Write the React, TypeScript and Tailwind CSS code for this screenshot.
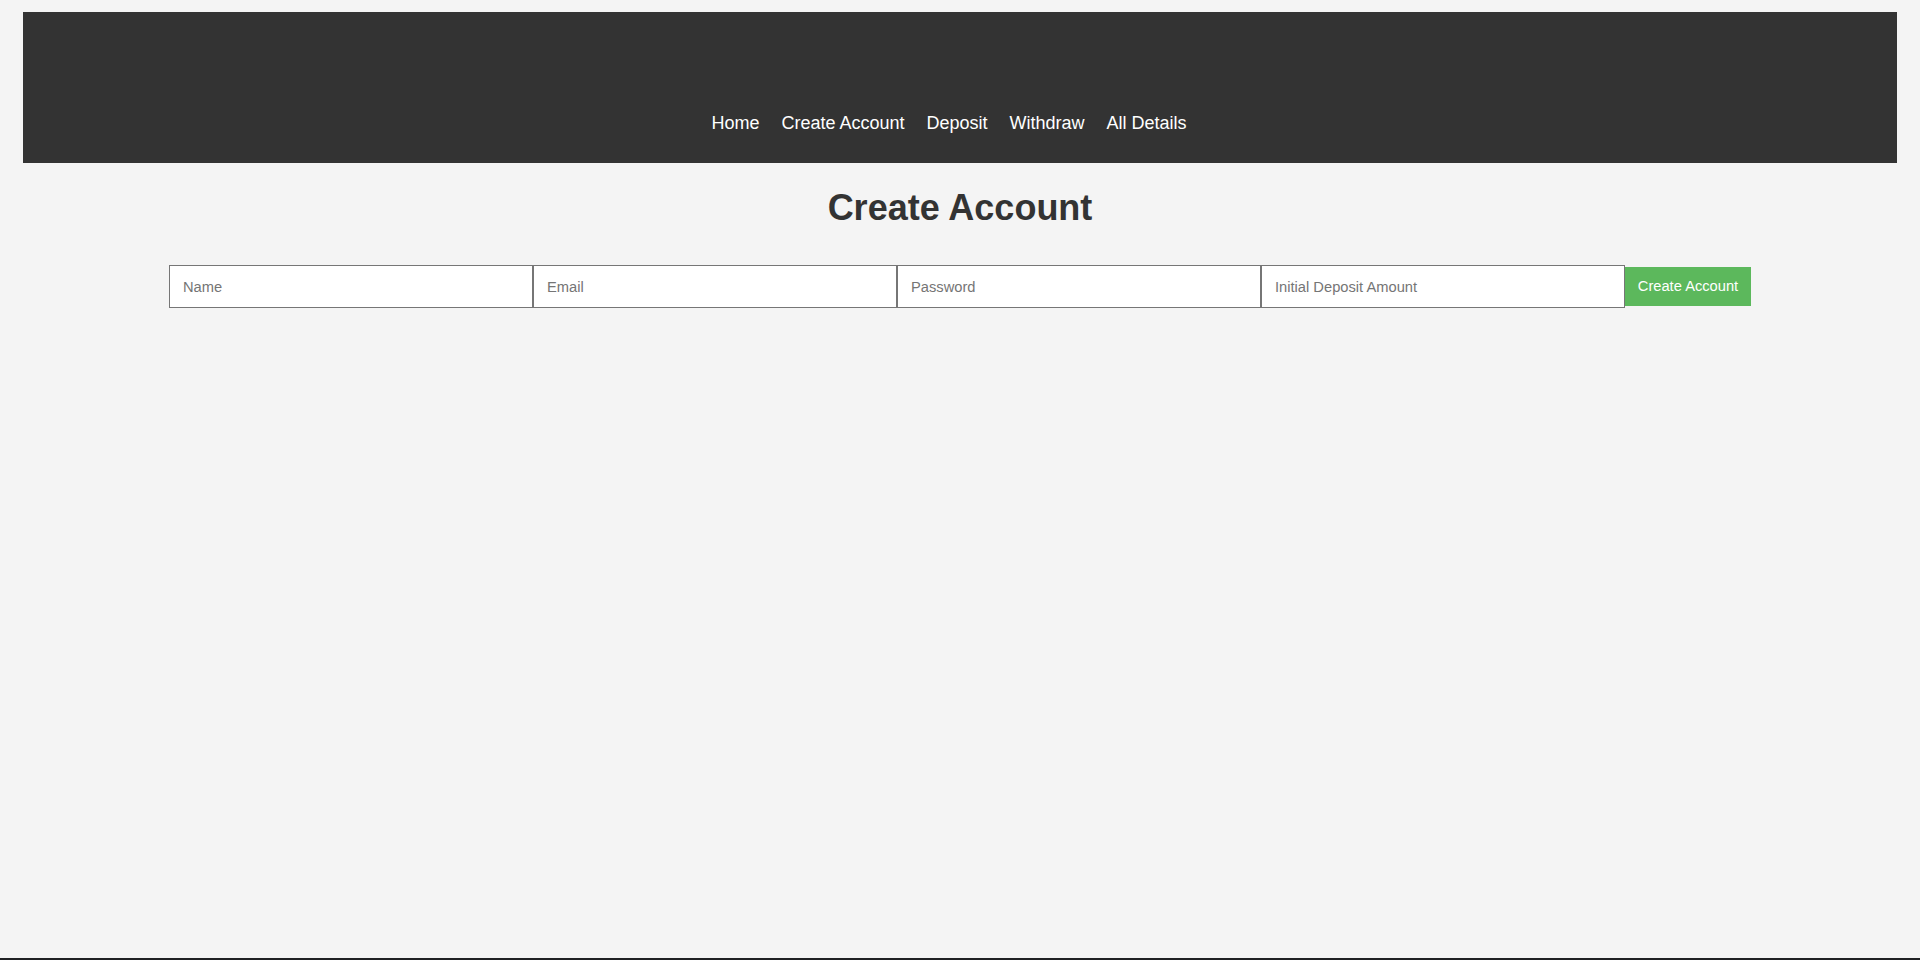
import { useState } from "react";

const navLinks = ["Home", "Create Account", "Deposit", "Withdraw", "All Details"];

export default function App() {
  const [form, setForm] = useState({ name: "", email: "", password: "", amount: "" });

  const update = (key: keyof typeof form) => (e: React.ChangeEvent<HTMLInputElement>) =>
    setForm({ ...form, [key]: e.target.value });

  const inputClass =
    "w-[364px] h-[43px] px-[13px] bg-white border border-[#767676] text-[14.7px] text-[#333] placeholder:text-[#757575] outline-none";

  return (
    <div className="h-screen flex flex-col bg-[#f4f4f4] font-['Liberation_Sans',Arial,sans-serif]">
      <div className="flex-1 px-[23px] pt-[12px]">
        <header className="bg-[#333] pt-[101px] pb-[30px]">
          <nav className="flex justify-center">
            {navLinks.map((link) => (
              <a
                key={link}
                href="#"
                className="mr-[22px] text-white text-[18px] leading-[20px] hover:underline"
              >
                {link}
              </a>
            ))}
          </nav>
        </header>

        <h2 className="mt-[27px] text-center text-[36px] leading-none font-bold text-[#333]">
          Create Account
        </h2>

        <form
          className="mt-[39px] flex justify-center items-center"
          onSubmit={(e) => e.preventDefault()}
        >
          <input className={inputClass} placeholder="Name" value={form.name} onChange={update("name")} />
          <input className={inputClass} placeholder="Email" value={form.email} onChange={update("email")} />
          <input
            className={inputClass}
            type="password"
            placeholder="Password"
            value={form.password}
            onChange={update("password")}
          />
          <input
            className={inputClass}
            placeholder="Initial Deposit Amount"
            value={form.amount}
            onChange={update("amount")}
          />
          <button
            type="submit"
            className="h-[39px] w-[126px] bg-[#5cb85c] text-white text-[14.7px] cursor-pointer hover:bg-[#4cae4c]"
          >
            Create Account
          </button>
        </form>
      </div>
      <div className="h-[2px] bg-[#202124]" />
    </div>
  );
}
